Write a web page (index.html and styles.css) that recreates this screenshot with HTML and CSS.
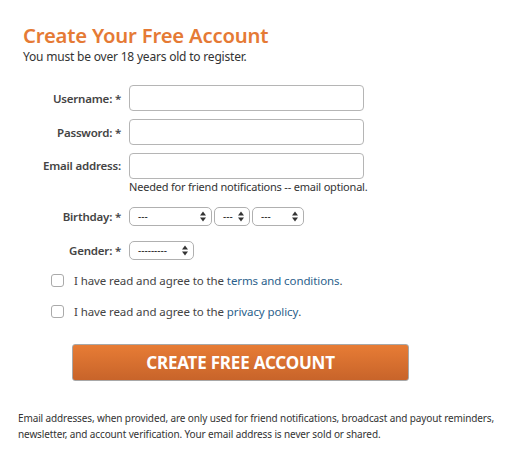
FILE: index.html
```html
<!DOCTYPE html>
<html lang="en">
<head>
    <meta charset="UTF-8">
    <title>Create Your Free Account</title>
    <link rel="stylesheet" href="styles.css">
</head>
<body>
    <div class="signup">
        <h1 class="signup-title">Create Your Free Account</h1>
        <p class="signup-sub">You must be over 18 years old to register.</p>

        <form class="signup-form">
            <div class="row">
                <label class="row-label" for="username">Username: *</label>
                <input class="text-input" type="text" id="username">
            </div>
            <div class="row">
                <label class="row-label" for="password">Password: *</label>
                <input class="text-input" type="password" id="password">
            </div>
            <div class="row row-email">
                <label class="row-label" for="email">Email address:</label>
                <div class="row-field">
                    <input class="text-input" type="text" id="email">
                    <div class="help">Needed for friend notifications -- email optional.</div>
                </div>
            </div>
            <div class="row row-select">
                <label class="row-label">Birthday: *</label>
                <div class="selects">
                    <span class="select sel-month">---<svg class="arrows" viewBox="0 0 6 10"><path d="M3 0 L6 4 H0 Z M0 6 H6 L3 10 Z"/></svg></span>
                    <span class="select sel-day">---<svg class="arrows" viewBox="0 0 6 10"><path d="M3 0 L6 4 H0 Z M0 6 H6 L3 10 Z"/></svg></span>
                    <span class="select sel-year">---<svg class="arrows" viewBox="0 0 6 10"><path d="M3 0 L6 4 H0 Z M0 6 H6 L3 10 Z"/></svg></span>
                </div>
            </div>
            <div class="row row-select row-last">
                <label class="row-label">Gender: *</label>
                <div class="selects">
                    <span class="select sel-gender">---------<svg class="arrows" viewBox="0 0 6 10"><path d="M3 0 L6 4 H0 Z M0 6 H6 L3 10 Z"/></svg></span>
                </div>
            </div>

            <label class="agree">
                <span class="checkbox"></span>
                I have read and agree to the&nbsp;<a href="#">terms and conditions</a>.
            </label>
            <label class="agree">
                <span class="checkbox"></span>
                I have read and agree to the&nbsp;<a href="#">privacy policy</a>.
            </label>

            <button type="button" class="submit">CREATE FREE ACCOUNT</button>
        </form>

        <p class="note">Email addresses, when provided, are only used for friend notifications, broadcast and payout reminders, newsletter, and account verification. Your email address is never sold or shared.</p>
    </div>
</body>
</html>
```

FILE: styles.css
```css
body {
    margin: 0;
    font-family: "Noto Sans", "Open Sans", sans-serif;
    color: #333;
    background: #fff;
}
.signup {
    padding: 21px 18px 0 18px;
}
.signup-title {
    margin: 0 0 0 5px;
    font-size: 20.3px;
    line-height: 28px;
    font-weight: 600;
    color: #e57a35;
    letter-spacing: -0.2px;
}
.signup-sub {
    margin: 0 0 0 5px;
    font-size: 12px;
    line-height: 16px;
    letter-spacing: -0.2px;
}
.signup-form {
    margin-top: 20px;
    font-size: 11.5px;
}
.row {
    display: flex;
    align-items: center;
    margin-bottom: 8px;
}
.row-email {
    align-items: flex-start;
    margin-bottom: 13px;
}
.row-email .row-label {
    line-height: 26px;
}
.row-select {
    margin-bottom: 15px;
}
.row-last {
    margin-bottom: 12px;
}
.row-label {
    width: 103px;
    text-align: right;
    font-weight: 600;
    color: #444;
    letter-spacing: -0.2px;
}
.row-field {
    margin-left: 8px;
}
.row > .text-input {
    margin-left: 8px;
}
.text-input {
    display: block;
    box-sizing: border-box;
    width: 235px;
    height: 26px;
    border: 1px solid #b5b5b5;
    border-radius: 4px;
    margin: 0;
}
.help {
    margin-top: 1px;
    font-size: 11px;
    line-height: 14px;
    letter-spacing: -0.2px;
}
.selects {
    margin-left: 8px;
    display: flex;
    gap: 2px;
}
.select {
    position: relative;
    box-sizing: border-box;
    height: 19px;
    border: 1px solid #b0b0b0;
    border-radius: 5px;
    font-size: 10px;
    line-height: 17px;
    padding-left: 8px;
    color: #222;
}
.arrows {
    position: absolute;
    right: 5px;
    top: 3px;
    width: 6px;
    height: 11px;
    fill: #333;
}
.sel-month { width: 83px; }
.sel-day { width: 36px; }
.sel-year { width: 52px; }
.sel-gender { width: 65px; }
.agree {
    display: flex;
    align-items: center;
    margin-left: 33px;
    height: 16px;
    margin-bottom: 15px;
    color: #444;
    letter-spacing: -0.1px;
}
.agree a {
    color: #2b5f8c;
    text-decoration: none;
}
.checkbox {
    box-sizing: border-box;
    width: 13px;
    height: 13px;
    border: 1px solid #aaa;
    border-radius: 3px;
    margin-right: 10px;
}
.submit {
    display: block;
    box-sizing: border-box;
    margin: 25px 0 0 54px;
    width: 337px;
    height: 37px;
    border: 1px solid #a8a8a8;
    border-radius: 3px;
    background: linear-gradient(#e77c35, #c8642a);
    color: #fff;
    font-family: inherit;
    font-size: 17px;
    font-weight: 700;
    letter-spacing: -0.2px;
}
.note {
    margin: 29px -12px 0 0;
    font-size: 10px;
    line-height: 16px;
    color: #333;
    letter-spacing: -0.12px;
}
```
